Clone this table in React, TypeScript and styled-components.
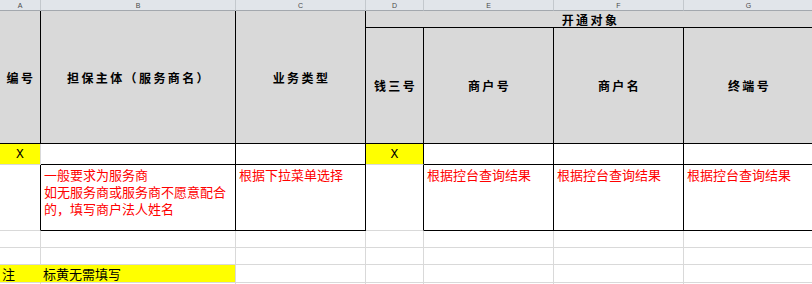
import React from 'react'
import styled, { createGlobalStyle } from 'styled-components'

const GRID = '#d9d9d9'
const INK = '#000'
const FILL = '#d9d9d9'
const MARK = '#ffff00'

const GlobalStyle = createGlobalStyle`
  html, body {
    margin: 0;
    padding: 0;
    background: #fff;
    overflow: hidden;
  }
  body {
    font-family: "Noto Sans CJK SC", "Liberation Sans", sans-serif;
  }
`

const Sheet = styled.div`
  display: grid;
  grid-template-columns: 41px 195px 130px 58px 130px 130px 130px;
  grid-template-rows: 11px 17px 116px 21px 66px 17px 17px 18px 20px;
  width: 812px;
  height: 284px;
  overflow: hidden;
  background: #fff;
`

interface PlaceProps {
  $col: string
  $row: string
  $r?: string
  $b?: string
}

const Base = styled.div<PlaceProps>`
  box-sizing: border-box;
  min-width: 0;
  overflow: hidden;
  grid-column: ${({ $col }) => $col};
  grid-row: ${({ $row }) => $row};
  border-right: 1px solid ${({ $r }) => $r ?? GRID};
  border-bottom: 1px solid ${({ $b }) => $b ?? GRID};
`

const ColHead = styled(Base)`
  background: #e1e5ea;
  border-right-color: #c3c8cd;
  border-bottom-color: #a3a8ae;
  display: flex;
  align-items: center;
  justify-content: center;
  font-family: "Liberation Sans", sans-serif;
  font-size: 7px;
  line-height: 1;
  color: #4a4a4a;
`

const HeadCell = styled(Base)`
  background: ${FILL};
  display: flex;
  align-items: center;
  justify-content: center;
  font-size: 12px;
  font-weight: 700;
  letter-spacing: 2.4px;
  color: #000;
  white-space: nowrap;
  padding-left: 2px;
`

const MarkCell = styled(Base)<{ $fill?: boolean }>`
  background: ${({ $fill }) => ($fill ? MARK : '#fff')};
  display: flex;
  align-items: center;
  justify-content: center;
  font-family: "Liberation Mono", monospace;
  font-size: 13px;
  color: #000;
`

const NoteCell = styled(Base)`
  padding: 1px 2px 0 3px;
  font-size: 13px;
  line-height: 17px;
  color: #ff0000;
  white-space: pre-line;
`

const YellowCell = styled(Base)`
  background: ${MARK};
  display: flex;
  align-items: center;
  padding-left: 2px;
  font-size: 13px;
  color: #000;
`

const Blank = styled(Base)``

const letters = ['A', 'B', 'C', 'D', 'E', 'F', 'G']

export default function App() {
  const blankRows = [6, 7, 9]

  return (
    <>
      <GlobalStyle />
      <Sheet>
        {letters.map((l, i) => (
          <ColHead key={l} $col={`${i + 1}`} $row="1">
            {l}
          </ColHead>
        ))}

        <HeadCell $col="1" $row="2 / 4" $r={INK} $b={INK}>编号</HeadCell>
        <HeadCell $col="2" $row="2 / 4" $r={INK} $b={INK}>担保主体（服务商名）</HeadCell>
        <HeadCell $col="3" $row="2 / 4" $r={INK} $b={INK}>业务类型</HeadCell>
        <HeadCell $col="4 / 8" $row="2" $r={FILL} $b={INK}>开通对象</HeadCell>
        <HeadCell $col="4" $row="3" $r={INK} $b={INK}>钱三号</HeadCell>
        <HeadCell $col="5" $row="3" $r={INK} $b={INK}>商户号</HeadCell>
        <HeadCell $col="6" $row="3" $r={INK} $b={INK}>商户名</HeadCell>
        <HeadCell $col="7" $row="3" $r={INK} $b={INK}>终端号</HeadCell>

        <MarkCell $fill $col="1" $row="4" $r={GRID}>X</MarkCell>
        <MarkCell $col="2" $row="4" $r={INK} $b={INK} />
        <MarkCell $col="3" $row="4" $r={INK} $b={INK} />
        <MarkCell $fill $col="4" $row="4" $r={INK}>X</MarkCell>
        <MarkCell $col="5" $row="4" $r={INK} $b={INK} />
        <MarkCell $col="6" $row="4" $r={INK} $b={INK} />
        <MarkCell $col="7" $row="4" $r={INK} $b={INK} />

        <Blank $col="1" $row="5" $r={INK} />
        <NoteCell $col="2" $row="5" $r={INK} $b={INK}>
          {'一般要求为服务商\n如无服务商或服务商不愿意配合\n的，填写商户法人姓名'}
        </NoteCell>
        <NoteCell $col="3" $row="5" $r={INK} $b={INK}>根据下拉菜单选择</NoteCell>
        <Blank $col="4" $row="5" $r={INK} />
        <NoteCell $col="5" $row="5" $r={INK} $b={INK}>根据控台查询结果</NoteCell>
        <NoteCell $col="6" $row="5" $r={INK} $b={INK}>根据控台查询结果</NoteCell>
        <NoteCell $col="7" $row="5" $r={INK} $b={INK}>根据控台查询结果</NoteCell>

        {blankRows.map((r) =>
          letters.map((l, i) => (
            <Blank key={`${l}${r}`} $col={`${i + 1}`} $row={`${r}`} />
          ))
        )}

        <YellowCell $col="1" $row="8" $r={MARK}>注</YellowCell>
        <YellowCell $col="2" $row="8">标黄无需填写</YellowCell>
        {letters.slice(2).map((l, i) => (
          <Blank key={`${l}8`} $col={`${i + 3}`} $row="8" />
        ))}
      </Sheet>
    </>
  )
}
